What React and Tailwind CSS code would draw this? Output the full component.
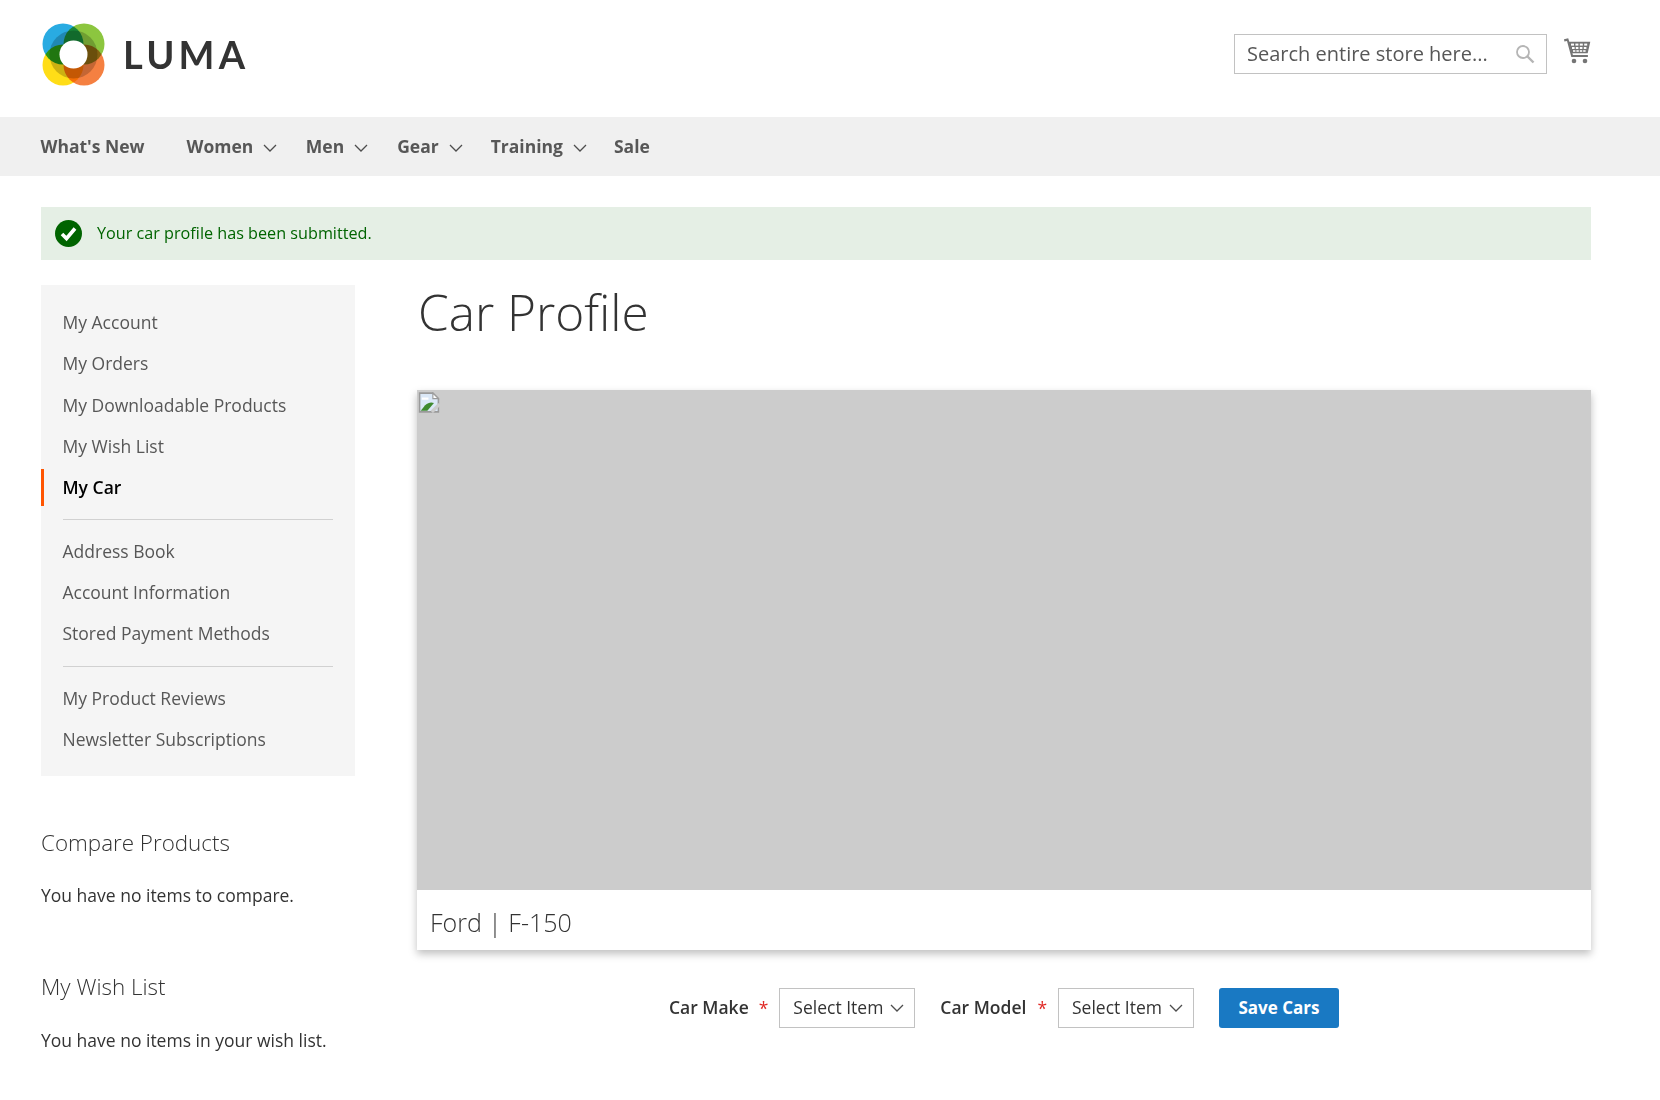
import React from "react";

const Chevron = ({ className = "" }) => (
  <svg width="14" height="8" viewBox="0 0 14 8" fill="none" stroke="#4d4d4d" strokeWidth="1.3" className={className}>
    <path d="M1 1l6 6 6-6" />
  </svg>
);

const Logo = () => (
  <svg width="64" height="64" viewBox="0 0 64 64" className="shrink-0">
    <g className="isolate">
      <circle cx="22" cy="21" r="20.5" fill="#29abe2" className="mix-blend-multiply" />
      <circle cx="43" cy="21" r="20.5" fill="#8cc63f" className="mix-blend-multiply" />
      <circle cx="22" cy="42" r="20.5" fill="#ffdd17" className="mix-blend-multiply" />
      <circle cx="43" cy="42" r="20.5" fill="#f58041" className="mix-blend-multiply" />
      <circle cx="32.5" cy="31.5" r="24" fill="#000" fillOpacity="0.2" />
      <circle cx="32.5" cy="31.5" r="14" fill="#fff" />
    </g>
  </svg>
);

const Cart = () => (
  <svg width="28" height="28" viewBox="0 0 28 28" fill="#757575">
    <path d="M1 2.2l4.2-.9 1.1 3.4h21l-2.6 11.6H9.4l.5 1.8h15v2H8.3L4 4 1.4 4.6z" />
    <g fill="#fff">
      <rect x="8" y="6.6" width="3" height="2" /><rect x="12.4" y="6.6" width="3" height="2" /><rect x="16.8" y="6.6" width="3" height="2" /><rect x="21.2" y="6.6" width="3" height="2" />
      <rect x="9" y="10" width="2.6" height="2" /><rect x="12.8" y="10" width="2.6" height="2" /><rect x="16.8" y="10" width="2.6" height="2" /><rect x="20.8" y="10" width="2.6" height="2" />
      <rect x="10" y="13.2" width="2.4" height="1.6" /><rect x="13.4" y="13.2" width="2.4" height="1.6" /><rect x="16.8" y="13.2" width="2.4" height="1.6" /><rect x="20.2" y="13.2" width="2.4" height="1.6" />
    </g>
    <circle cx="11" cy="24" r="2.3" /><circle cx="22" cy="24" r="2.3" />
  </svg>
);

const Search = () => (
  <svg width="20" height="20" viewBox="0 0 20 20" fill="none" stroke="#b5b5b5">
    <circle cx="8" cy="8" r="6" strokeWidth="1.8" />
    <path d="M12.5 12.5l6 6" strokeWidth="2.4" />
  </svg>
);

const BrokenImage = () => (
  <svg width="22" height="21" viewBox="0 0 19 19">
    <path d="M1 1h12l5 5v12H1z" fill="#dbe8f7" stroke="#9a9a9a" strokeWidth="1.4" />
    <path d="M2 17l4-5c3-3 6-3 8-2l-6 7z" fill="#3f8a2e" />
    <path d="M3 5h6v2H3z" fill="#fff" />
    <path d="M13 1v5h5z" fill="#fff" stroke="#9a9a9a" />
    <path d="M12 18l7-7" stroke="#ccc" strokeWidth="3" />
  </svg>
);

const NavItem = ({ label, className = "" }) => (
  <div className={`flex items-center gap-[10px] ${className}`}>
    <span>{label}</span>
    <Chevron className="mt-[3px]" />
  </div>
);

const SideLink = ({ children }) => (
  <a className="block h-[41.3px] pl-[21.5px] leading-[41px] text-[#575757]">{children}</a>
);

const Divider = () => <div className="ml-[21.5px] mr-[22px] my-[11px] h-px bg-[#d1d1d1]" />;

export default function App() {
  return (
    <div className="min-h-[1100px] bg-white text-[17.5px] text-[#333] font-['Open_Sans',sans-serif]">
      <header className="flex h-[117px] items-start justify-between pl-[41px] pr-[69px]">
        <div className="mt-[23px] flex items-center gap-[18px]">
          <Logo />
          <span className="-mt-[2px] font-['Lato',sans-serif] text-[38px] font-bold leading-none tracking-[0.11em] text-[#333]">LUMA</span>
        </div>
        <div className="mt-[34px] flex items-start gap-[16px]">
          <div className="flex h-[40px] w-[313px] items-center justify-between border border-[#c2c2c2] pl-[12px] pr-[11px]">
            <span className="text-[20px] text-[#575757]">Search entire store here...</span>
            <Search />
          </div>
          <div className="mt-[3px]"><Cart /></div>
        </div>
      </header>

      <nav className="flex h-[59px] items-center bg-[#f0f0f0] pl-[40.5px] font-bold text-[#575757]">
        <span className="mr-[42px]">What's New</span>
        <NavItem label="Women" className="mr-[28.5px]" />
        <NavItem label="Men" className="mr-[29px]" />
        <NavItem label="Gear" className="mr-[28px]" />
        <NavItem label="Training" className="mr-[27px]" />
        <span>Sale</span>
      </nav>

      <main className="px-[41px] pr-[69px] pt-[31px]">
        <div className="flex h-[53px] items-center bg-[#e5efe5] pl-[14px] text-[16.2px] text-[#006400]">
          <svg width="27" height="27" viewBox="0 0 27 27" className="shrink-0">
            <circle cx="13.5" cy="13.5" r="13.5" fill="#006400" />
            <path d="M7 14l4.5 4.5L20 8.5" fill="none" stroke="#fff" strokeWidth="3.6" />
          </svg>
          <span className="ml-[15px] -mt-[1px]">Your car profile has been submitted.</span>
        </div>

        <div className="mt-[25px] flex gap-[62px]">
          <aside className="w-[314px] shrink-0">
            <div className="bg-[#f5f5f5] pt-[17px] pb-[16px]">
              <SideLink>My Account</SideLink>
              <SideLink>My Orders</SideLink>
              <SideLink>My Downloadable Products</SideLink>
              <SideLink>My Wish List</SideLink>
              <div className="pt-[2px] pb-[1.6px]">
                <div className="h-[37px] border-l-[3px] border-[#ff5501] pl-[18.5px] leading-[37px] font-semibold text-black">My Car</div>
              </div>
              <Divider />
              <SideLink>Address Book</SideLink>
              <SideLink>Account Information</SideLink>
              <SideLink>Stored Payment Methods</SideLink>
              <Divider />
              <SideLink>My Product Reviews</SideLink>
              <SideLink>Newsletter Subscriptions</SideLink>
            </div>
            <h3 className="mt-[52px] text-[22.4px] font-light leading-[30px] text-[#333]">Compare Products</h3>
            <p className="mt-[23px] leading-[28px]">You have no items to compare.</p>
            <h3 className="mt-[63px] text-[22.4px] font-light leading-[30px] text-[#333]">My Wish List</h3>
            <p className="mt-[24px] leading-[28px]">You have no items in your wish list.</p>
          </aside>

          <section className="min-w-0 flex-1">
            <h1 className="ml-[1px] -mt-[1px] text-[49.5px] font-light leading-[56px] text-[#333]">Car Profile</h1>
            <div className="mt-[50px] shadow-[0_4px_8px_rgba(0,0,0,0.25)]">
              <div className="h-[500px] bg-[#ccc] pl-[1px] pt-[2px]"><BrokenImage /></div>
              <div className="flex h-[60px] items-center pl-[13px] pt-[6px] text-[25px] font-light text-[#333]">Ford | F-150</div>
            </div>
            <div className="mt-[38px] flex items-center justify-center">
              <label className="-mt-[1px] font-semibold">Car Make</label>
              <span className="ml-[10px] text-[#e02b27]">*</span>
              <div className="ml-[11px] flex h-[40px] w-[136px] items-center justify-between border border-[#c2c2c2] pl-[13px] pr-[10px]">
                <span className="-mt-[1px]">Select Item</span><Chevron />
              </div>
              <label className="-mt-[1px] ml-[25px] font-semibold">Car Model</label>
              <span className="ml-[11px] text-[#e02b27]">*</span>
              <div className="ml-[11px] flex h-[40px] w-[136px] items-center justify-between border border-[#c2c2c2] pl-[13px] pr-[10px]">
                <span className="-mt-[1px]">Select Item</span><Chevron />
              </div>
              <button className="ml-[25px] flex h-[40px] w-[120px] items-center justify-center rounded-[3px] bg-[#1979c3] text-[17px] font-bold text-white">Save Cars</button>
            </div>
          </section>
        </div>
      </main>
    </div>
  );
}
